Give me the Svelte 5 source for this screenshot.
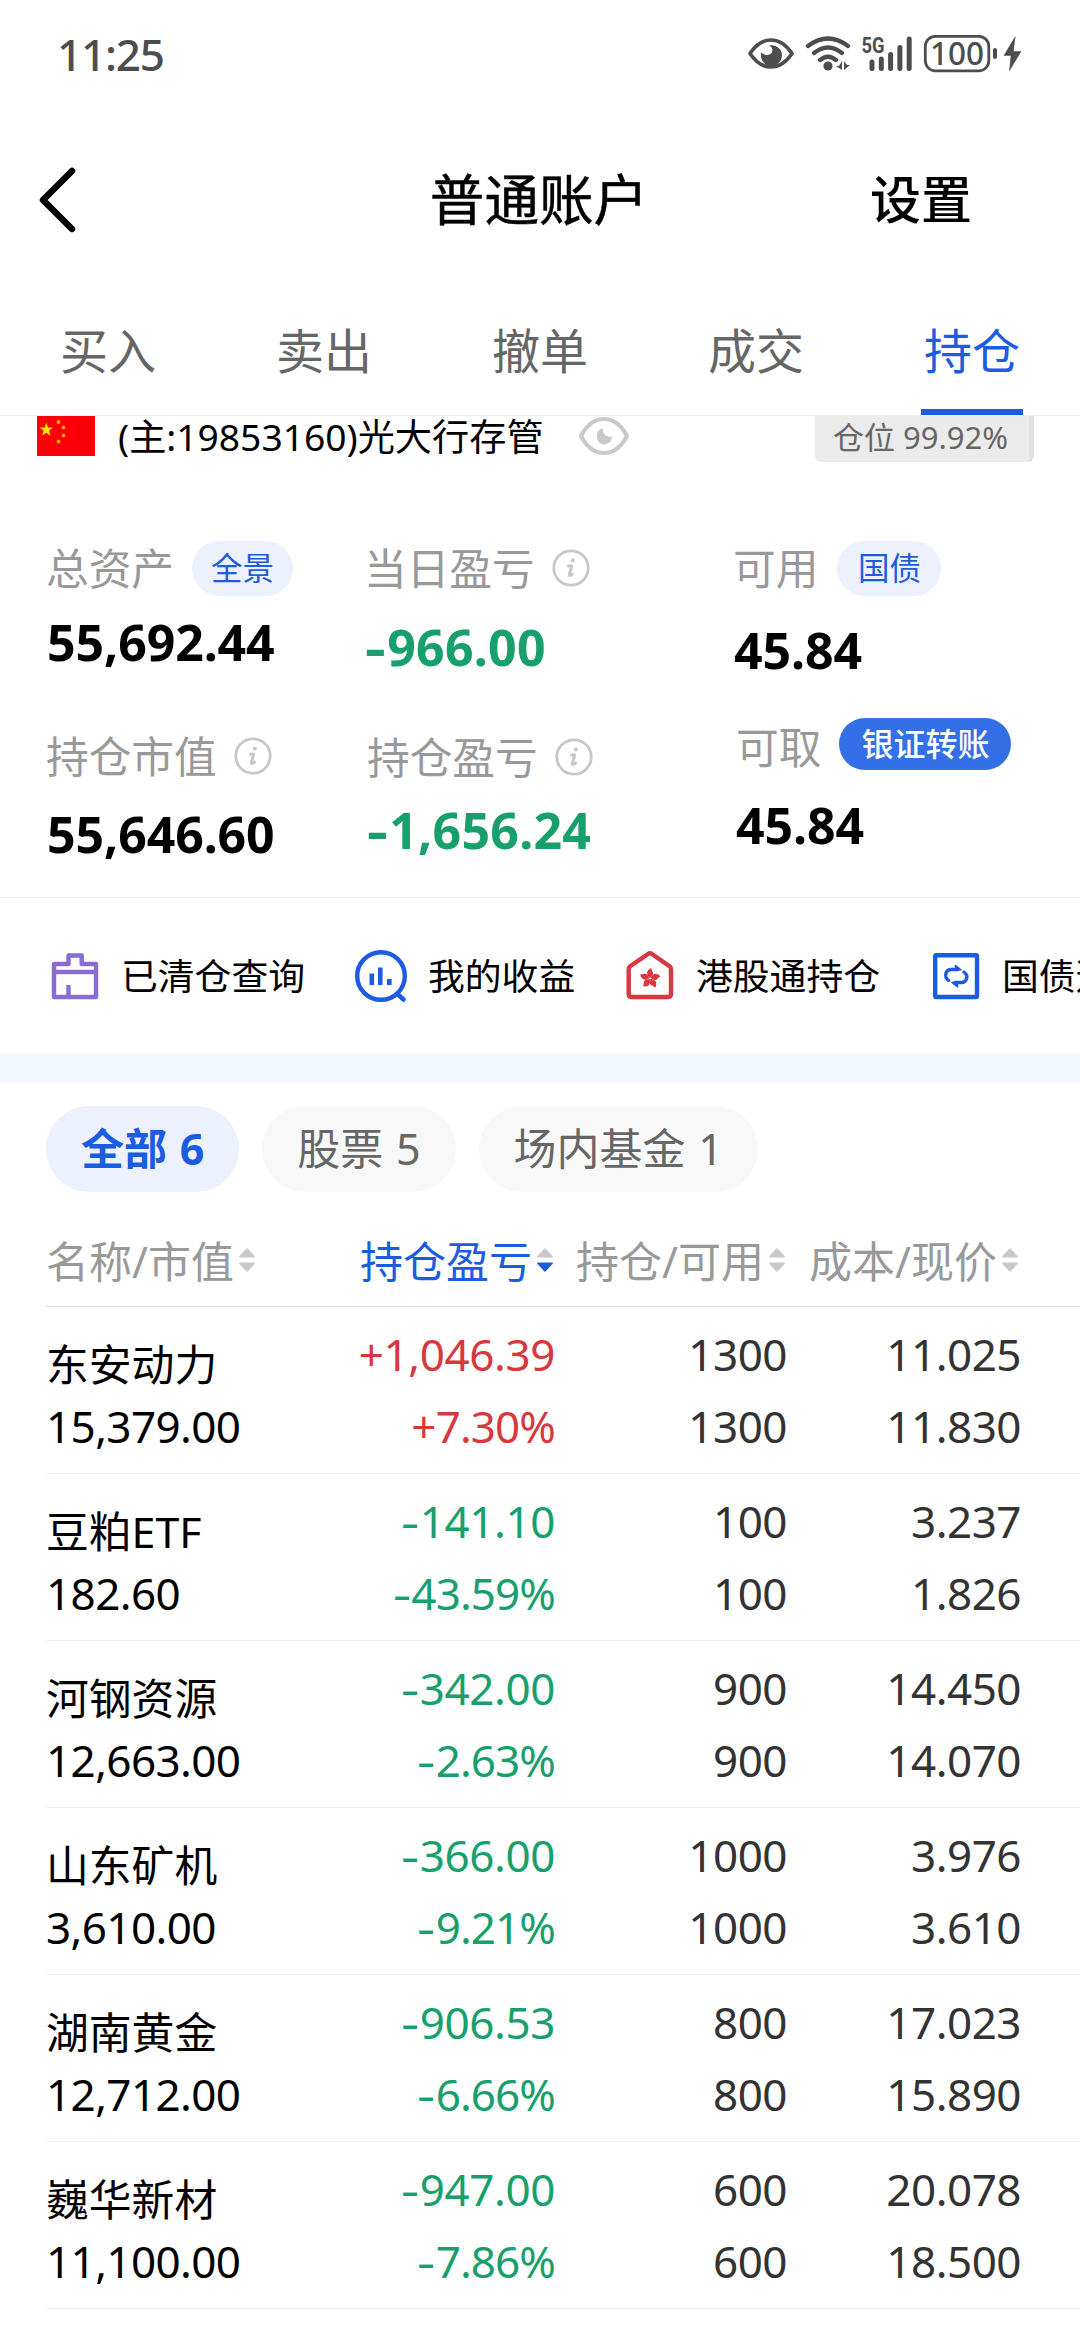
<script>
  const tabs = ['买入', '卖出', '撤单', '成交', '持仓'];
  const chips = ['全部 6', '股票 5', '场内基金 1'];
  const columns = ['名称/市值', '持仓盈亏', '持仓/可用', '成本/现价'];
  const holdings = [
    { name: '东安动力', value: '15,379.00', sign: '+', pnl: '1,046.39', pct: '7.30%', qty: '1300', avail: '1300', cost: '11.025', price: '11.830' },
    { name: '豆粕ETF', value: '182.60', sign: '-', pnl: '141.10', pct: '43.59%', qty: '100', avail: '100', cost: '3.237', price: '1.826' },
    { name: '河钢资源', value: '12,663.00', sign: '-', pnl: '342.00', pct: '2.63%', qty: '900', avail: '900', cost: '14.450', price: '14.070' },
    { name: '山东矿机', value: '3,610.00', sign: '-', pnl: '366.00', pct: '9.21%', qty: '1000', avail: '1000', cost: '3.976', price: '3.610' },
    { name: '湖南黄金', value: '12,712.00', sign: '-', pnl: '906.53', pct: '6.66%', qty: '800', avail: '800', cost: '17.023', price: '15.890' },
    { name: '巍华新材', value: '11,100.00', sign: '-', pnl: '947.00', pct: '7.86%', qty: '600', avail: '600', cost: '20.078', price: '18.500' }
  ];
</script>

{#snippet info()}
  <svg class="info" width="38" height="38" viewBox="0 0 38 38" fill="none" stroke="#c8c8c8" stroke-linecap="round" stroke-linejoin="round">
    <circle cx="19" cy="19" r="17.200" stroke-width="2.800" />
    <path d="M16.500 17h3.200l-2.400 8.500q-.3 2 3.200-.3" stroke-width="3" />
    <circle cx="20.800" cy="11.500" r="2" fill="#c8c8c8" stroke="none" />
  </svg>
{/snippet}

{#snippet signed(sign, text)}
  <span class="sign" class:minus={sign === '-'}>{sign}</span>{text}
{/snippet}

<main>
  <header class="status">
    <span class="clock">11:25</span>
    <svg width="280" height="44" viewBox="744 32 280 44" fill="none" stroke="#4d4d4d" stroke-linecap="round" stroke-linejoin="round">
      <path d="M750 53.500Q759 40 771 40T792 53.500Q783 67 771 67T750 53.500Z" stroke-width="3.600" />
      <path d="M769 45.500c5 2 4.500 9-1 9.500-3 .2-5-1-7-2.500-1 7 3.500 13.500 10 13.500s11-5 11-11c0-6-6-11-13-9.500Z" fill="#4d4d4d" stroke="none" />
      <path d="M808 46Q828 31 848 46M814 53Q828 42 842 53M820 60Q828 53.500 836 60" stroke-width="4.200" />
      <circle cx="828" cy="66" r="4.600" fill="#4d4d4d" stroke="none" />
      <path d="M842 61v9l-6-4h3ZM844 61v9l6-5h-3Z" fill="#4d4d4d" stroke="none" />
      <path d="M872 62v6.500M881.300 59v9.500M890.600 54.500v14M899.900 47.500v21M909.200 39v29.500" stroke-width="5" />
      <rect x="925.300" y="36.300" width="63.500" height="34.500" rx="10" stroke-width="2.800" />
      <path d="M995 50v7" stroke-width="4" />
      <path d="M1015 37l-11 18.500h7l-1.500 15 11.500-19h-7.500Z" fill="#4d4d4d" stroke="#4d4d4d" stroke-width=".5" />
      <text class="net" x="861.500" y="53" textLength="23" lengthAdjust="spacingAndGlyphs">5G</text>
      <text class="bat" x="930" y="65" textLength="54" lengthAdjust="spacingAndGlyphs">100</text>
    </svg>
  </header>

  <nav class="titlebar">
    <svg class="back" width="40" height="68" viewBox="0 0 40 68" fill="none" stroke="#000" stroke-width="6.500" stroke-linecap="round" stroke-linejoin="round">
      <path d="M35 5 6 34l29 29" />
    </svg>
    <h1>普通账户</h1>
    <span class="settings">设置</span>
  </nav>

  <nav class="tabs">
    {#each tabs as tab, i}
      <div class="tab" class:active={i === 4}><span>{tab}</span></div>
    {/each}
  </nav>

  <section class="account">
    <svg class="flag" width="58" height="40" viewBox="0 0 58 40">
      <rect width="58" height="40" fill="#fb0007" />
      <path fill="#ffe500" d="M9.300 6.500l1.700 5h5l-4 3.200 1.500 5.100-4.200-3.100-4.200 3.100 1.500-5.100-4-3.200h5Z" />
      <g fill="#ffa500">
        <circle cx="21.500" cy="6" r="1.900" /><circle cx="26.500" cy="11.500" r="1.900" />
        <circle cx="26.500" cy="19.500" r="1.900" /><circle cx="21.500" cy="25.500" r="1.900" />
      </g>
    </svg>
    <span class="acct">(主:19853160)光大行存管</span>
    <svg class="eye" width="52" height="40" viewBox="0 0 52 40">
      <path d="M3 20Q12 3 26 3T49 20Q40 37 26 37T3 20Z" fill="none" stroke="#c9c9c9" stroke-width="4.200" stroke-linejoin="round" />
      <path d="M25 12c-1 6 3 9.500 9 8.500 0 5-4 8-8.500 8a8.500 8.500 0 0 1-.5-16.500Z" fill="#c9c9c9" />
    </svg>
    <span class="position">仓位 99.92%</span>
  </section>

  <section class="assets">
    <div class="col c1">
      <div class="label"><span>总资产</span><b class="pill">全景</b></div>
      <div class="amount">55,692.44</div>
      <div class="label"><span>持仓市值</span>{@render info()}</div>
      <div class="amount">55,646.60</div>
    </div>
    <div class="col c2">
      <div class="label"><span>当日盈亏</span>{@render info()}</div>
      <div class="amount green">{@render signed('-', '966.00')}</div>
      <div class="label shift"><span>持仓盈亏</span>{@render info()}</div>
      <div class="amount green shift">{@render signed('-', '1,656.24')}</div>
    </div>
    <div class="col c3">
      <div class="label"><span>可用</span><b class="pill">国债</b></div>
      <div class="amount">45.84</div>
      <div class="label shift"><span>可取</span><b class="pill solid">银证转账</b></div>
      <div class="amount shift">45.84</div>
    </div>
  </section>

  <section class="actions">
    <div class="action a1">
      <svg width="56" height="56" viewBox="0 0 56 56" fill="none" stroke="#8a6bd0" stroke-width="4.400" stroke-linejoin="round">
        <path d="M8 16h14.500V7.500h13.200V16H50v33H8ZM8 24h42M22.500 37v12" />
      </svg><span>已清仓查询</span>
    </div>
    <div class="action a2">
      <svg width="56" height="56" viewBox="0 0 56 56" fill="none" stroke="#1c5de0" stroke-width="4.400">
        <circle cx="28" cy="28" r="23.800" />
        <path d="M44.500 46l6 5.500" stroke-width="4.500" stroke-linecap="round" />
        <path d="M18.800 25.500v11.500M27.300 19.500v17.500M36.300 31v6" stroke-width="4.600" />
      </svg><span>我的收益</span>
    </div>
    <div class="action a3">
      <svg width="56" height="56" viewBox="0 0 56 56">
        <path d="M6.700 21.500q0-2 1.500-3.300L26 6q2-1.500 4 0l17.500 12.200q1.500 1.300 1.500 3.300V46q0 3-3 3H9.700q-3 0-3-3Z" fill="none" stroke="#d8393f" stroke-width="4.400" />
        <g fill="#d8393f">
          {#each [0, 72, 144, 216, 288] as angle}
            <path transform="rotate({angle} 28 30.500)" d="M28 30C23.500 26.500 24.500 21.500 29.500 20c-1 2 2.500 4 1.500 6.500-.6 1.700-2.300 2-3 3.500Z" />
          {/each}
        </g>
      </svg><span>港股通持仓</span>
    </div>
    <div class="action a4">
      <svg width="56" height="56" viewBox="0 0 56 56" fill="none" stroke="#1c5de0" stroke-width="4.400" stroke-linejoin="round" stroke-linecap="round">
        <rect x="7.200" y="7.200" width="41.800" height="41.800" rx="1" />
        <path d="M20.500 32.500c-5-4-3-11 3-11h6.500M36 24c5 4 3 10.500-3 10.500h-6" stroke-width="3.400" />
        <path d="M27.500 17.500l5.500 4.300h-5.500ZM29.500 38.800L24 34.500h5.500Z" fill="#1c5de0" stroke-width="1.500" />
      </svg><span>国债逆回购</span>
    </div>
  </section>

  <div class="band"></div>

  <section class="chips">
    {#each chips as chip, i}
      <span class="chip" class:on={i === 0}>{chip}</span>
    {/each}
  </section>

  <section class="table">
    <div class="thead">
      {#each columns as column, i}
        <div class="th h{i}" class:sorted={i === 1}>
          <span>{column}</span>
          <svg width="16" height="24" viewBox="0 0 16 24">
            <path d="M8 0l8 8.500q0 1-1 1H1q-1 0-1-1Z" fill="#c8c8c8" />
            <path d="M8 24l8-8.500q0-1-1-1H1q-1 0-1 1Z" fill={i === 1 ? '#1b5ce0' : '#c8c8c8'} />
          </svg>
        </div>
      {/each}
    </div>
    {#each holdings as h}
      <div class="row">
        <div class="cell first"><span class="name">{h.name}</span><span>{h.value}</span></div>
        <div class="cell pnl" class:up={h.sign === '+'}>
          <span>{@render signed(h.sign, h.pnl)}</span><span class="pct">{@render signed(h.sign, h.pct)}</span>
        </div>
        <div class="cell"><span>{h.qty}</span><span>{h.avail}</span></div>
        <div class="cell"><span>{h.cost}</span><span>{h.price}</span></div>
      </div>
    {/each}
  </section>
</main>

<style>
  :global(body) { background: #fff; overflow: hidden; }
  main {
    width: 1080px; height: 2340px; overflow: hidden; background: #fff; color: #000;
    font-family: "Noto Sans", "Noto Sans CJK SC", sans-serif; white-space: nowrap;
  }
  svg { flex: none; display: block; }
  .status { height: 110px; box-sizing: border-box; padding: 0 56px 2px 57px; display: flex; align-items: center; justify-content: space-between; color: #4d4d4d; }
  .clock { font-size: 44px; line-height: 60px; font-weight: 500; letter-spacing: -1.200px; padding-bottom: 1px; }
  .net { font: 700 22px Roboto, sans-serif; fill: #4d4d4d; stroke: none; }
  .bat { font: 500 32px "Noto Sans", sans-serif; fill: #4d4d4d; stroke: none; }

  .titlebar { height: 180px; display: grid; grid-template-columns: 330px 418px 1fr; align-items: center; }
  .back { margin-left: 37px; }
  h1 { margin: 0; font-size: 54.600px; font-weight: 400; line-height: 70px; padding-bottom: 2px; text-align: center; -webkit-text-stroke: .5px #000; }
  .settings { font-size: 51px; line-height: 70px; padding-bottom: 2px; font-weight: 500; padding-left: 122px; }

  .tabs { height: 125px; display: grid; grid-template-columns: repeat(5, 1fr); border-bottom: 1px solid #eee; }
  .tab { display: flex; justify-content: center; font-size: 48px; line-height: 122px; color: #666; }
  .tab span { height: 119px; padding: 0 3px; }
  .active { color: #1b5ce0; }
  .active span { border-bottom: 6px solid #1b5ce0; }

  .account { height: 125px; display: flex; align-items: flex-start; padding-left: 37px; }
  .acct { font-size: 37.200px; line-height: 41px; margin-left: 23px; width: 460px; }
  .position {
    margin-left: 185px; width: 219px; box-sizing: border-box; height: 46px; padding-left: 18px; font-size: 31px; line-height: 43px;
    color: #666; background: #ebebeb; border-right: 5px solid #e0e0e0; border-radius: 0 0 6px 6px;
  }

  .assets { height: 356px; display: grid; grid-template-columns: 318px 369px 1fr; padding-left: 46px; border-bottom: 1px solid #eee; }
  .col { display: flex; flex-direction: column; }
  .label { height: 56px; display: flex; align-items: center; font-size: 42.700px; line-height: 56px; color: #999; }
  .label .info { margin-left: 17px; margin-top: -2px; }
  .amount { height: 60px; line-height: 61px; font-size: 50px; font-weight: 700; padding-left: 1px; letter-spacing: -.1px; }
  .c1 .amount:nth-child(2) { margin: 15px 0 57px; }
  .c1 .amount:nth-child(4) { margin-top: 19px; }
  .c2 .amount:nth-child(2) { margin: 20px 0 53px; }
  .c2 .amount:nth-child(4) { margin-top: 14px; }
  .c3 .amount:nth-child(2) { margin: 23px 0 36px; }
  .c3 .amount:nth-child(4) { margin-top: 23px; }
  .c3 .label.shift span { padding-top: 7px; }
  .shift, .amount.shift { padding-left: 3px; }
  .green { color: #17a06c; letter-spacing: .25px; }
  .pill {
    height: 55px; line-height: 54px; border-radius: 28px; padding: 0 19px; margin: -2px 0 0 18px; background: #ecf1fd;
    color: #1e5cdc; font-size: 31.500px; font-weight: 400;
  }
  .c3 .pill { padding: 0 20.500px; margin-left: 19px; }
  .c3 .pill.solid { height: 52px; line-height: 51px; margin: 0 0 0 18px; padding: 0 22px; background: #336fe6; color: #fff; font-size: 32px; font-weight: 500; }
  .sign { display: inline-block; }
  .minus { transform: scaleX(1.300); transform-origin: left; margin-right: .12em; }

  .actions { height: 156px; display: flex; align-items: center; overflow: hidden; font-size: 36.800px; }
  .action { display: flex; align-items: center; flex: none; }
  .action span { line-height: 50px; }
  .a1 { margin-left: 46px; width: 307px; }
  .a1 span { margin-left: 19px; }
  .a2 { width: 269px; }
  .a2 span { margin-left: 19px; }
  .a3 { width: 306px; }
  .a3 span { margin-left: 18px; }
  .a4 span { margin-left: 18px; }

  .band { height: 29px; background: #f2f6fe; }

  .chips { display: flex; gap: 23px; padding: 23px 0 0 46px; }
  .chip { height: 86px; line-height: 86px; border-radius: 43px; padding: 0 35px; background: #f8f8f8; color: #666; font-size: 43px; word-spacing: 1.500px; }
  .on { background: #ecf1fd; color: #1b5ce0; font-weight: 700; }

  .table { margin-left: 46px; }
  .thead { height: 114px; display: flex; border-bottom: 1px solid #e5e5e5; box-sizing: content-box; }
  .th { display: flex; align-items: center; font-size: 43px; line-height: 60px; color: #999; padding-top: 25px; }
  .th svg { margin-left: 5px; margin-top: -3px; }
  .h0 { width: 314px; }
  .h1 { width: 216px; }
  .h2 { width: 233px; }
  .sorted { color: #1b5ce0; }
  .row { height: 166px; display: grid; grid-template-columns: 194px 315px 232px 234px; border-bottom: 1px solid #f0f0f0; font-size: 44px; }
  .cell { display: flex; flex-direction: column; gap: 12px; padding-top: 17px; text-align: right; color: #333; line-height: 60px; letter-spacing: -.5px; }
  .first { text-align: left; color: #000; gap: 0; padding-top: 28px; letter-spacing: -.6px; }
  .name { font-size: 42.800px; height: 61px; letter-spacing: 0; }
  .pnl { color: #17a06c; letter-spacing: -.4px; }
  .pct { letter-spacing: -.9px; }
  .up { color: #d8373c; }
</style>
